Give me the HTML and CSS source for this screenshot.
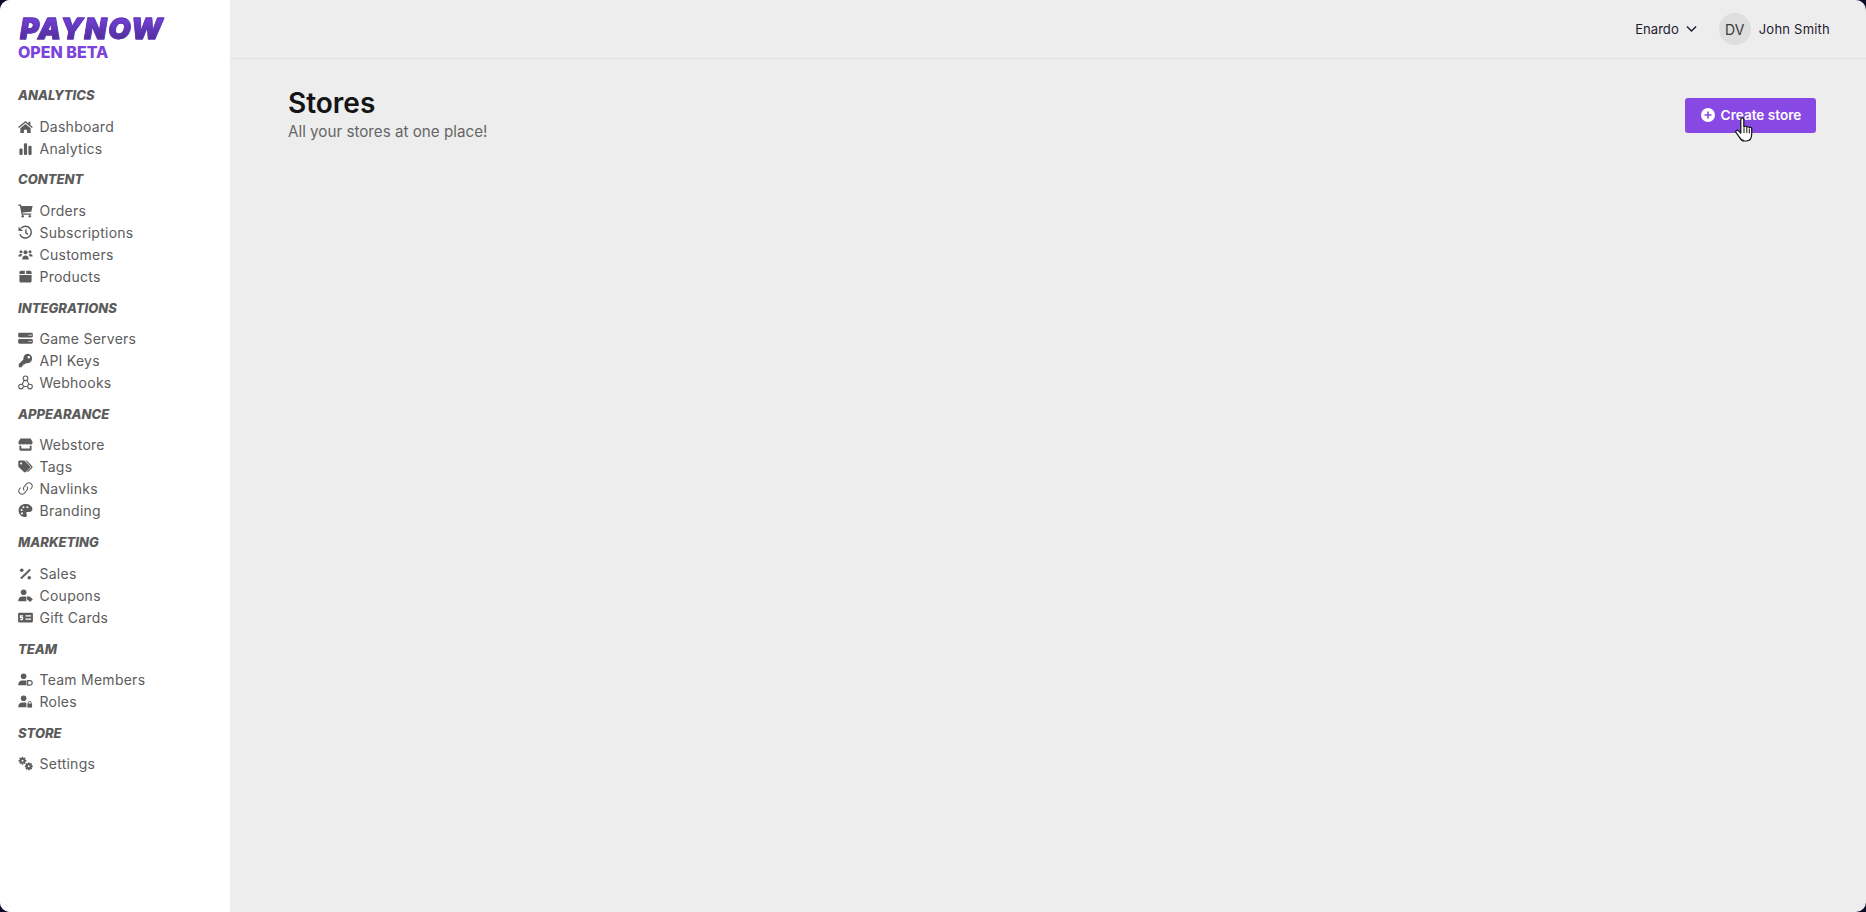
FILE: index.html
```html
<!DOCTYPE html>
<html lang="en">
<head>
<meta charset="utf-8">
<title>PayNow - Stores</title>
<link rel="stylesheet" href="styles.css">
</head>
<body>
<div class="app">
  <aside class="sidebar">
    <div class="logo">
      <div class="logo-name">PAYNOW</div>
      <div class="logo-beta">OPEN BETA</div>
    </div>
    <nav class="nav">
      <section class="nav-group">
        <h2 class="nav-title">ANALYTICS</h2>
        <a class="nav-item"><svg class="ico" viewBox="0 0 16 16"><path d="M8 2 .2 8.400l1 1.100L8 4l6.800 5.500 1-1.100-2.600-2.100V3h-2v1.700z"/><path d="M2.500 9.800 8 5.300l5.500 4.500V15H9.700v-3.600H6.300V15H2.500z"/></svg><span>Dashboard</span></a>
        <a class="nav-item"><svg class="ico" viewBox="0 0 16 16"><rect x="1.500" y="8" width="3.400" height="7" rx="1.200"/><rect x="6.300" y="2.500" width="3.400" height="12.500" rx="1.200"/><rect x="11.100" y="5" width="3.400" height="10" rx="1.200"/></svg><span>Analytics</span></a>
      </section>
      <section class="nav-group">
        <h2 class="nav-title">CONTENT</h2>
        <a class="nav-item"><svg class="ico" viewBox="0 0 16 16"><path d="M.3 1.500h2.900l.4 1.600h12l-1.400 6.100-9.300.9.3 1.200h9v1.300H3.900L2 2.800H.3z"/><circle cx="5" cy="14.200" r="1.300"/><circle cx="12.600" cy="14.200" r="1.300"/></svg><span>Orders</span></a>
        <a class="nav-item"><svg class="ico" viewBox="0 0 16 16"><path fill="none" stroke="currentColor" stroke-width="1.600" d="M3 3.600A6.300 6.300 0 1 1 2 9.800"/><path d="M.6 1.800 5.400 6.400H.6z"/><path fill="none" stroke="currentColor" stroke-width="1.500" d="M8.400 4.600v3.700l2.300 1.700"/></svg><span>Subscriptions</span></a>
        <a class="nav-item"><svg class="ico" viewBox="0 0 16 16"><circle cx="3.200" cy="5" r="1.600"/><circle cx="12.800" cy="5" r="1.600"/><circle cx="8" cy="5.600" r="2.100"/><path d="M.4 10.200C.4 8.400 1.400 7.400 3 7.400c.7 0 1.200.2 1.600.5-.6.6-1 1.400-1.100 2.300zM15.600 10.200C15.600 8.400 14.600 7.400 13 7.400c-.7 0-1.200.2-1.600.5.6.6 1 1.400 1.100 2.300zM4.500 13.200c0-2.600 1.300-4.200 3.500-4.200s3.500 1.600 3.500 4.200z"/></svg><span>Customers</span></a>
        <a class="nav-item"><svg class="ico" viewBox="0 0 16 16"><path d="M1.500 6.500h13v6.300c0 .9-.7 1.600-1.600 1.600H3.100c-.9 0-1.600-.7-1.600-1.600zM3.200 1.800h4.100v3.600H1.500V3.500c0-.9.8-1.700 1.700-1.700zM8.700 1.800h4.100c.9 0 1.700.8 1.700 1.700v1.900H8.700z"/></svg><span>Products</span></a>
      </section>
      <section class="nav-group">
        <h2 class="nav-title">INTEGRATIONS</h2>
        <a class="nav-item"><svg class="ico" viewBox="0 0 16 16"><path fill-rule="evenodd" d="M1.500 1.800h13c.7 0 1.300.6 1.300 1.300v2.500c0 .7-.6 1.300-1.300 1.300h-13C.8 6.900.2 6.300.2 5.600V3.100c0-.7.6-1.300 1.300-1.300zm10.500 1.900a.7.700 0 1 0 0 1.400.7.700 0 0 0 0-1.400zm2 0a.7.700 0 1 0 0 1.400.7.700 0 0 0 0-1.400zM1.500 8.400h13c.7 0 1.300.6 1.300 1.300v2.500c0 .7-.6 1.300-1.300 1.300h-13c-.7 0-1.300-.6-1.300-1.300V9.700c0-.7.6-1.300 1.300-1.300zm10.500 1.900a.7.700 0 1 0 0 1.400.7.700 0 0 0 0-1.400zm2 0a.7.700 0 1 0 0 1.400.7.700 0 0 0 0-1.400z"/></svg><span>Game Servers</span></a>
        <a class="nav-item"><svg class="ico" viewBox="0 0 16 16"><path fill-rule="evenodd" d="M10.200.8a5 5 0 1 1-1.500 9.800L7.400 12H5.800v1.600H4.200v1.600H.8v-3.400l5-5A5 5 0 0 1 10.200.8zm1.300 2.300a1.400 1.400 0 1 0 0 2.800 1.400 1.400 0 0 0 0-2.800z"/></svg><span>API Keys</span></a>
        <a class="nav-item"><svg class="ico ico-line" viewBox="0 0 16 16"><circle cx="8" cy="3.500" r="2.500"/><circle cx="3.200" cy="12.300" r="2.500"/><circle cx="12.800" cy="12.300" r="2.500"/><path d="M6.700 5.800 4.300 10M9.500 5.700 11.800 10M5.800 12.300H10.200"/></svg><span>Webhooks</span></a>
      </section>
      <section class="nav-group">
        <h2 class="nav-title">APPEARANCE</h2>
        <a class="nav-item"><svg class="ico" viewBox="0 0 16 16"><path d="M2.600 1.500h10.800L15.500 5v1c0 1.200-1 2.100-2 2.100-.9 0-1.400-.4-1.800-1-.4.6-1 1-1.900 1s-1.400-.4-1.800-1c-.4.6-1 1-1.900 1s-1.400-.4-1.800-1c-.4.6-1 1-1.800 1-1 0-2-.9-2-2.100V5z"/><path d="M1.500 9.300c.7.2 1.400.2 2 0v2.900h9V9.300c.6.2 1.300.2 2 0v4c0 .7-.6 1.300-1.300 1.300H2.800c-.7 0-1.300-.6-1.300-1.300z"/></svg><span>Webstore</span></a>
        <a class="nav-item"><svg class="ico" viewBox="0 0 16 16"><path fill-rule="evenodd" d="M.3 3.100c0-.8.6-1.400 1.400-1.400h4.600c.4 0 .7.1 1 .4l5.400 5.400c.6.6.6 1.400 0 2l-4.400 4.400c-.6.6-1.400.6-2 0L.7 8.500c-.3-.3-.4-.6-.4-1zm3 .6a1.100 1.100 0 1 0 0 2.200 1.100 1.100 0 0 0 0-2.200z"/><path d="M9.300 1.700 15 7.400c.7.7.7 1.500 0 2.200l-4.500 4.500-.9-.9 4.600-4.700L8 1.700z"/></svg><span>Tags</span></a>
        <a class="nav-item"><svg class="ico ico-line" viewBox="0 0 16 16"><path d="M9.400 5.900a3.200 3.200 0 0 1 0 4l-2.700 3.200A3.500 3.500 0 0 1 1.500 8.500l1.200-1.500"/><path d="M6.600 10.100a3.200 3.200 0 0 1 0-4l2.700-3.200a3.500 3.500 0 0 1 5.200 4.600L13.300 9"/></svg><span>Navlinks</span></a>
        <a class="nav-item"><svg class="ico" viewBox="0 0 16 16"><path fill-rule="evenodd" d="M8 1C3.800 1 .6 4 .6 8s3.200 7 7 7c1.200 0 1.900-.8 1.900-1.700 0-1.100-.7-1.400-.7-2.300 0-.8.6-1.300 1.400-1.300h1.700c1.900 0 3.500-1.300 3.500-3.200C15.400 3.200 12 1 8 1zM3.800 6.300a1.100 1.100 0 1 1 0 2.200 1.100 1.100 0 0 1 0-2.200zm2-2.900a1.100 1.100 0 1 1 0 2.200 1.100 1.100 0 0 1 0-2.200zm4.200 0a1.100 1.100 0 1 1 0 2.200 1.100 1.100 0 0 1 0-2.200zM4.200 10a1.100 1.100 0 1 1 0 2.200 1.100 1.100 0 0 1 0-2.200z"/></svg><span>Branding</span></a>
      </section>
      <section class="nav-group">
        <h2 class="nav-title">MARKETING</h2>
        <a class="nav-item"><svg class="ico" viewBox="0 0 16 16"><circle cx="4" cy="4.500" r="1.900"/><circle cx="12" cy="12.500" r="1.900"/><path d="M12.300 3 13.700 4.400 3.800 14 2.400 12.600z"/></svg><span>Sales</span></a>
        <a class="nav-item"><svg class="ico" viewBox="0 0 16 16"><circle cx="6" cy="4.500" r="3"/><path d="M.2 14c0-3 1.800-5 4.300-5h3c.5 0 1 .1 1.400.3V14z"/><path d="M9.500 9h3l3.300 2.900-2.800 3-3.500-3z"/></svg><span>Coupons</span></a>
        <a class="nav-item"><svg class="ico" viewBox="0 0 16 16"><path fill-rule="evenodd" d="M1.300 2.800h13.400c.7 0 1.200.5 1.200 1.200v8c0 .7-.5 1.200-1.200 1.200H1.300C.6 13.200.1 12.700.1 12V4c0-.7.5-1.200 1.200-1.200zM8 5.700v1.300h6V5.700zM8 9v1.300h6V9zM2 5.500h3.500v1.300H3.800v.7H5.500v3H4.300v.8H3.200v-.8H2V9.300h2.200v-.7H2z"/></svg><span>Gift Cards</span></a>
      </section>
      <section class="nav-group">
        <h2 class="nav-title">TEAM</h2>
        <a class="nav-item"><svg class="ico" viewBox="0 0 16 16"><circle cx="6" cy="4.500" r="3"/><path d="M.2 14c0-3 1.800-5 4.300-5h3c.5 0 1 .1 1.400.3V14z"/><path fill-rule="evenodd" d="M12.800 8.600c1.700 0 3 1.300 3 3s-1.300 3-3 3H9.500v-6zm-1.900 1.300v3.400h1.900a1.700 1.700 0 0 0 0-3.400z"/></svg><span>Team Members</span></a>
        <a class="nav-item"><svg class="ico" viewBox="0 0 16 16"><circle cx="6" cy="4.500" r="3"/><path d="M.2 14c0-3 1.800-5 4.300-5h3c.5 0 1 .1 1.400.3V14z"/><path d="M10 10.200h5V14.500h-5z"/><path fill="none" stroke="currentColor" stroke-width="1" d="M11 10.500V9.300a1.500 1.500 0 0 1 3 0v1.200"/></svg><span>Roles</span></a>
      </section>
      <section class="nav-group">
        <h2 class="nav-title">STORE</h2>
        <a class="nav-item"><svg class="ico" viewBox="0 0 16 16"><circle cx="4.800" cy="5" r="2.100" fill="none" stroke="currentColor" stroke-width="2"/><path fill="none" stroke="currentColor" stroke-width="1.600" d="M4.800.8v2M4.800 7.200v2M.6 5h2M7 5h2M1.800 2l1.400 1.400M6.400 6.600 7.800 8M1.800 8l1.400-1.400M6.400 3.400 7.800 2"/><circle cx="11.500" cy="11" r="2.200" fill="none" stroke="currentColor" stroke-width="2.200"/><path fill="none" stroke="currentColor" stroke-width="1.800" d="M11.500 6.800v2M11.500 13.200v2M7.300 11h2M13.700 11h2M8.500 8l1.400 1.400M13.100 12.600l1.400 1.400M8.500 14l1.400-1.400M13.100 9.400 14.500 8"/></svg><span>Settings</span></a>
      </section>
    </nav>
  </aside>
  <div class="main">
    <header class="topbar">
      <div class="store-picker"><span>Enardo</span><svg class="chevron" viewBox="0 0 12 8"><path d="M1 1.200 6 6.200l5-5"/></svg></div>
      <div class="user">
        <div class="avatar">DV</div>
        <span class="user-name">John Smith</span>
      </div>
    </header>
    <main class="content">
      <div class="page-head">
        <div>
          <h1 class="page-title">Stores</h1>
          <p class="page-sub">All your stores at one place!</p>
        </div>
        <button class="btn-create"><svg class="btn-ico" viewBox="0 0 14 14"><path fill-rule="evenodd" d="M7 0a7 7 0 1 1 0 14A7 7 0 0 1 7 0zM6.200 3.500v2.700H3.500v1.600h2.700v2.700h1.600V7.800h2.700V6.200H7.800V3.500z"/></svg><span>Create store</span></button>
      </div>
    </main>
  </div>
  <svg class="cursor" viewBox="0 0 18 25"><path d="M5.800 2.300a1.500 1.500 0 0 1 3 0V10h.4a1.400 1.400 0 0 1 2.600.3 1.400 1.400 0 0 1 2.500.6 1.300 1.300 0 0 1 2.400.8V17c0 4-1.800 7-5.500 7H9.500c-2.600 0-3.700-1.300-5-3.600L1 15.300c-.8-1.500 1-2.800 2.200-1.700l2.600 2.500z" fill="#fff" stroke="#111" stroke-width="1.200" stroke-linejoin="round"/><path d="M9 11v5M11.800 11v5M14.300 12v4.500" fill="none" stroke="#111" stroke-width="1"/></svg>
</div>
</body>
</html>
```
FILE: styles.css
```css
* { box-sizing: border-box; }
html, body { height: 100%; }
body {
  margin: 0;
  background: #0b0b2c;
  font-family: "Inter", "Liberation Sans", sans-serif;
  overflow: hidden;
}
.app {
  position: relative;
  display: flex;
  height: 100vh;
  border-radius: 10px;
  overflow: hidden;
  background: #ededed;
}
.sidebar {
  width: 230px;
  flex: none;
  background: #fff;
  padding: 15px 18px 0;
}
.logo { height: 69px; }
.logo-name {
  font-size: 29px;
  line-height: 28px;
  font-weight: 900;
  font-style: italic;
  letter-spacing: 1.600px;
  margin-left: 2px;
  width: max-content;
  background: linear-gradient(180deg, #7843e0, #4a2b8e);
  -webkit-background-clip: text;
  background-clip: text;
  color: transparent;
  -webkit-text-stroke: .8px #5d33b4;
}
.logo-beta {
  font-size: 16px;
  line-height: 18px;
  font-weight: 800;
  color: #7a44dc;
}
.nav-group { margin-bottom: 9.33px; }
.nav-title {
  margin: 0 0 9px;
  height: 22px;
  font-size: 13px;
  line-height: 23px;
  font-weight: 800;
  font-style: italic;
  color: #5b5b5b;
}
.nav-item {
  display: flex;
  align-items: center;
  gap: 6.500px;
  height: 22px;
  font-size: 14px;
  letter-spacing: .25px;
  color: #5c5c5c;
}
.ico {
  width: 15px;
  height: 15px;
  flex: none;
  fill: currentColor;
}
.ico-line {
  fill: none;
  stroke: currentColor;
  stroke-width: 1.100;
}
.main {
  flex: 1;
  display: flex;
  flex-direction: column;
  min-width: 0;
}
.topbar {
  height: 59px;
  flex: none;
  display: flex;
  align-items: center;
  justify-content: flex-end;
  gap: 22px;
  padding-right: 36px;
  border-bottom: 1px solid #e0e0e0;
  color: #1f1a2e;
}
.store-picker {
  display: flex;
  align-items: center;
  gap: 7px;
  font-size: 13.100px;
}
.chevron {
  width: 11px;
  height: 8px;
  fill: none;
  stroke: #1f1a2e;
  stroke-width: 1.500;
}
.user {
  display: flex;
  align-items: center;
  gap: 8px;
}
.avatar {
  width: 32px;
  height: 32px;
  border-radius: 50%;
  background: #dedede;
  display: flex;
  align-items: center;
  justify-content: center;
  font-size: 14px;
  color: #3a3a3a;
}
.user-name {
  font-size: 13px;
  font-weight: 400;
  letter-spacing: .22px;
}
.content {
  flex: 1;
  padding: 27px 50px 0 58px;
}
.page-head {
  display: flex;
  justify-content: space-between;
  align-items: flex-start;
}
.page-title {
  margin: 0;
  font-size: 28px;
  line-height: 34px;
  font-weight: 600;
  color: #141414;
}
.page-sub {
  margin: 0;
  font-size: 15.200px;
  line-height: 24px;
  color: #666;
}
.btn-create {
  margin-top: 12px;
  width: 131px;
  height: 35px;
  border: 0;
  border-radius: 3px;
  background: #8848e4;
  color: #fff;
  font: 600 13.600px "Inter", "Liberation Sans", sans-serif;
  display: flex;
  align-items: center;
  justify-content: center;
  gap: 6px;
  padding: 0 0 2px 1px;
}
.btn-ico {
  width: 14px;
  height: 14px;
  fill: #fff;
}
.cursor {
  position: absolute;
  left: 1735px;
  top: 117px;
  width: 18px;
  height: 25px;
}
```
